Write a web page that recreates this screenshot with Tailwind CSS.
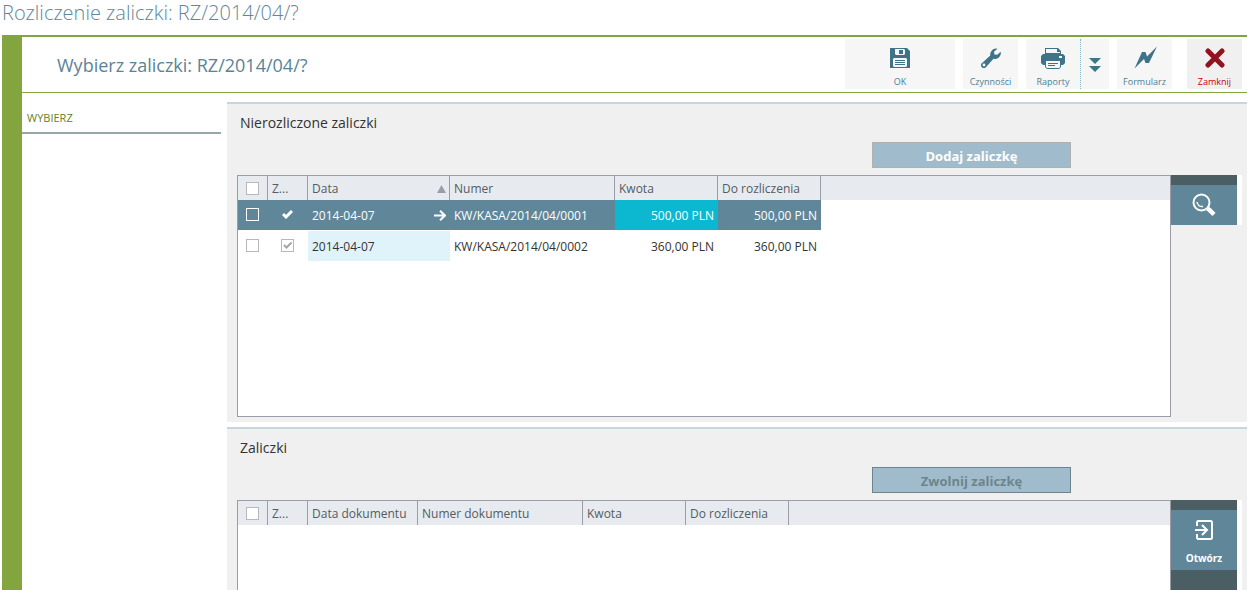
<!DOCTYPE html>
<html lang="pl">
<head>
<meta charset="utf-8">
<meta name="viewport" content="width=device-width, initial-scale=1">
<title>Rozliczenie zaliczki</title>
<script src="https://cdn.jsdelivr.net/npm/@tailwindcss/browser@4"></script>
</head>
<body class="flex h-screen flex-col overflow-hidden bg-white pr-0.5 pl-0.5 font-['Open_Sans','Noto_Sans',sans-serif] text-xs text-[#333]">
<h1 class="h-[35px] shrink-0 pt-px text-xl leading-6 font-light text-[#5f8799]">Rozliczenie zaliczki: RZ/2014/04/?</h1>

<div class="flex min-h-0 flex-1 border-t-2 border-[#82a53d]">
  <div class="w-5 shrink-0 bg-[#82a53d]"></div>
  <div class="flex min-w-0 flex-1 flex-col">

    <header class="flex h-14 shrink-0 items-start border-b border-[#82a53d] pt-0.5 pr-[5px] pl-[35px] text-[#5f8799]">
      <h2 class="flex-1 pt-3 text-lg leading-7 text-[#5a8496]">Wybierz zaliczki: RZ/2014/04/?</h2>
      <nav class="flex gap-2 text-[9px] leading-3 text-[#4f7f94]">
        <button type="button" class="flex h-[50px] w-[110px] flex-col items-center gap-2 bg-[#f6f6f6] pt-[9px]">
          <svg class="size-5 shrink-0" viewBox="0 0 20 20" fill="none"><path fill="#3f7488" fill-rule="evenodd" d="M0 0H17L20 3V20H0ZM5 1V6L6 7H14L15 6V2L14 1ZM3 11V18L4 19H16L17 18V11L16 10H4Z"/><path fill="#3f7488" d="M9 2h4v4H9z"/><path stroke="#3f7488" d="M5 12.500h10M5 14.500h10M5 16.500h10"/></svg>
          OK
        </button>
        <button type="button" class="flex h-[50px] w-[55px] flex-col items-center gap-2 bg-[#f6f6f6] pt-[9px]">
          <svg class="size-5 shrink-0" viewBox="0 0 20 20"><path fill="#3f7488" fill-rule="evenodd" d="M16.500.7A6 6 0 0 0 9.300 7.600L.8 15.200A2.900 2.900 0 0 0 4.900 19.300L12.500 10.800A6 6 0 0 0 19.700 3.700L16.200 6.800L13.400 6.400L13 3.800ZM3 15.600a1.400 1.400 0 1 1 0 2.800a1.400 1.400 0 0 1 0-2.800Z"/></svg>
          Czynności
        </button>
        <div class="flex">
          <button type="button" class="flex h-[50px] w-[55px] flex-col items-center gap-2 border-r border-dotted border-[#8bb0c0] bg-[#f6f6f6] pt-[9px]">
            <svg class="h-[21px] w-6 shrink-0 -mb-px" viewBox="0 0 24 21"><path fill="#3f7488" fill-rule="evenodd" d="M4 6V0H17L20 3V6H22L24 8V15L22 17H20V19L18 21H6L4 19V17H2L0 15V8L2 6ZM5 1V5H19V4H16V1ZM18 8V10H21V8ZM5 13V19L6 20H18L19 19V13Z"/><path fill="#3f7488" d="M7 15h10v1H7zM7 17h7v1H7z"/></svg>
            Raporty
          </button>
          <button type="button" aria-label="Więcej raportów" class="flex h-[50px] w-7 items-center justify-center bg-[#f6f6f6] pt-px">
            <svg class="h-[14px] w-3" viewBox="0 0 12 14"><path fill="#3f7488" d="M0 0H12L6 6ZM0 8H12L6 14Z"/></svg>
          </button>
        </div>
        <button type="button" class="flex h-[50px] w-[55px] flex-col items-center gap-2 bg-[#f6f6f6] pt-[9px]">
          <svg class="h-5 w-6 shrink-0 overflow-visible" viewBox="0 0 24 20"><path fill="#3f7488" d="M1.500 20.500L9 4H12.500L14 8.500L24-1.500L16 15H12.500L11 11Z"/></svg>
          Formularz
        </button>
        <button type="button" class="ml-[7px] flex h-[50px] w-[55px] flex-col items-center gap-2 bg-[#f0f0f0] pt-[9px] text-[#c8000d]">
          <svg class="size-5 shrink-0" viewBox="0 0 20 20" fill="none"><path stroke="#94121f" stroke-width="5" stroke-linecap="round" d="M3 3L17 17M17 3L3 17"/></svg>
          Zamknij
        </button>
      </nav>
    </header>

    <div class="flex min-h-0 flex-1 gap-[6px]">
      <aside class="w-[199px] shrink-0">
        <a href="#" class="block h-[41px] border-b-2 border-[#96a6ab] pt-[17px] pl-[5px] text-[11px] leading-4 text-[#6b7f1e]">WYBIERZ</a>
      </aside>

      <main class="flex min-w-0 flex-1 flex-col gap-[5px] pt-[9px]">
        <section class="shrink-0 border-t-2 border-[#c5d6dd] bg-[#f0f0f0] pr-[5px] pb-[5px] pl-[10px]">
          <h3 class="h-[38px] pt-[7px] pl-[3px] text-sm leading-6">Nierozliczone zaliczki</h3>
          <div class="mr-[171px] flex h-[33px] items-start justify-end">
            <button type="button" class="h-[26px] w-[199px] border border-[#b0b0b0] bg-[#a0bccc] pt-px text-[13px] leading-5 font-bold text-white">Dodaj zaliczkę</button>
          </div>
          <div class="flex items-start">
            <div class="h-[242px] min-w-0 flex-1 border border-[#9c9ca8] bg-white">
              <table class="w-full table-fixed border-collapse">
                <colgroup><col class="w-[30px]"><col class="w-10"><col class="w-[142px]"><col class="w-[165px]"><col class="w-[103px]"><col class="w-[103px]"><col></colgroup>
                <thead class="bg-[#e7ebf0] text-left text-[#535c62]">
                  <tr class="h-6">
                    <th class="p-0 pr-0.5 font-normal shadow-[inset_-1px_0_#9c9ca8]"><input type="checkbox" aria-label="Zaznacz wszystkie" class="mx-auto block size-[13px] appearance-none border border-[#b8b8b8] bg-white"></th>
                    <th class="p-0 pt-0.5 pl-1 font-normal shadow-[inset_-1px_0_#9c9ca8]">Z...</th>
                    <th class="p-0 pt-0.5 pl-1 font-normal shadow-[inset_-1px_0_#9c9ca8]"><span class="flex items-center justify-between pr-1">Data <svg class="h-2 w-[9px]" viewBox="0 0 9 8"><path fill="#9c9ca8" d="M4.500 0L9 8H0Z"/></svg></span></th>
                    <th class="p-0 pt-0.5 pl-1 font-normal shadow-[inset_-1px_0_#9c9ca8]">Numer</th>
                    <th class="p-0 pt-0.5 pl-1 font-normal shadow-[inset_-1px_0_#9c9ca8]">Kwota</th>
                    <th class="p-0 pt-0.5 pl-1 font-normal shadow-[inset_-1px_0_#9c9ca8]">Do rozliczenia</th>
                    <td class="p-0"></td>
                  </tr>
                </thead>
                <tbody>
                  <tr class="h-[30px] text-white">
                    <td class="bg-[#5f8799] p-0 pr-0.5"><input type="checkbox" aria-label="Zaznacz KW/KASA/2014/04/0001" class="mx-auto block size-[13px] appearance-none border border-white"></td>
                    <td class="bg-[#5f8799] p-0 pr-0.5"><svg role="img" aria-label="Tak" class="mx-auto block h-[9px] w-[11px]" viewBox="0 0 11 9" fill="none"><path stroke="#fff" stroke-width="3" d="M1 4L4 7L10 1"/></svg></td>
                    <td class="bg-[#5f8799] p-0 pt-0.5 pl-1"><span class="flex items-center justify-between pr-1">2014-04-07 <svg class="h-[11px] w-3" viewBox="0 0 12 11" fill="none"><path stroke="#fff" stroke-width="2" d="M0 5.500H11M6 .7L11 5.500L6 10.300"/></svg></span></td>
                    <td class="bg-[#5f8799] p-0 pt-0.5 pl-1">KW/KASA/2014/04/0001</td>
                    <td class="bg-[#0cb8cf] p-0 pt-0.5 pr-1 text-right">500,00 PLN</td>
                    <td class="bg-[#5f8799] p-0 pt-0.5 pr-1 text-right">500,00 PLN</td>
                    <td class="p-0"></td>
                  </tr>
                  <tr class="h-[31px] border-t border-white">
                    <td class="p-0 pr-0.5"><input type="checkbox" aria-label="Zaznacz KW/KASA/2014/04/0002" class="mx-auto block size-[13px] appearance-none border border-[#b8b8b8] bg-white"></td>
                    <td class="p-0 pr-0.5"><label class="mx-auto grid size-[13px] place-items-center"><input type="checkbox" checked aria-label="Zatwierdzona" class="col-start-1 row-start-1 block size-[13px] appearance-none border border-[#b8b8b8] bg-white"><svg class="pointer-events-none col-start-1 row-start-1 h-[7px] w-[9px]" viewBox="0 0 9 7" fill="none"><path stroke="#a6a6a6" stroke-width="2" d="M1 3L3.500 5.500L8.500.5"/></svg></label></td>
                    <td class="bg-[#e0f3fb] p-0 pt-0.5 pl-1">2014-04-07</td>
                    <td class="p-0 pt-0.5 pl-1">KW/KASA/2014/04/0002</td>
                    <td class="p-0 pt-0.5 pr-1 text-right">360,00 PLN</td>
                    <td class="p-0 pt-0.5 pr-1 text-right">360,00 PLN</td>
                    <td class="p-0"></td>
                  </tr>
                </tbody>
              </table>
            </div>
            <div class="w-[71px] shrink-0 bg-white pr-[5px]">
              <button type="button" aria-label="Szukaj" class="flex h-[50px] w-full items-center justify-center border-t-10 border-[#4a5e64] bg-[#5f8799]">
                <svg class="size-6" viewBox="0 0 24 24" fill="none" stroke="#fff"><circle cx="9.500" cy="9.500" r="8" stroke-width="2"/><path stroke-width="1.500" d="M5 9C5.500 12.500 8 14 11 13.500"/><path stroke-width="4.500" d="M15.500 15.500L17.500 17L22 21.500"/></svg>
              </button>
            </div>
          </div>
        </section>

        <section class="flex min-h-0 flex-1 flex-col border-t-2 border-[#c5d6dd] bg-[#f0f0f0] pr-[5px] pl-[10px]">
          <h3 class="h-[38px] shrink-0 pt-[7px] pl-[3px] text-sm leading-6">Zaliczki</h3>
          <div class="mr-[171px] flex h-[33px] shrink-0 items-start justify-end">
            <button type="button" class="h-[26px] w-[199px] border border-[#6c858c] bg-[#a0bccc] pt-px text-[13px] leading-5 font-bold text-[#6c858c]">Zwolnij zaliczkę</button>
          </div>
          <div class="flex min-h-0 flex-1">
            <div class="min-w-0 flex-1 border border-b-0 border-[#9c9ca8] bg-white">
              <table class="w-full table-fixed border-collapse">
                <colgroup><col class="w-[30px]"><col class="w-10"><col class="w-[110px]"><col class="w-[165px]"><col class="w-[103px]"><col class="w-[103px]"><col></colgroup>
                <thead class="bg-[#e7ebf0] text-left text-[#535c62]">
                  <tr class="h-6">
                    <th class="p-0 pr-0.5 font-normal shadow-[inset_-1px_0_#9c9ca8]"><input type="checkbox" aria-label="Zaznacz wszystkie" class="mx-auto block size-[13px] appearance-none border border-[#b8b8b8] bg-white"></th>
                    <th class="p-0 pt-0.5 pl-1 font-normal shadow-[inset_-1px_0_#9c9ca8]">Z...</th>
                    <th class="p-0 pt-0.5 pl-1 font-normal shadow-[inset_-1px_0_#9c9ca8]">Data dokumentu</th>
                    <th class="p-0 pt-0.5 pl-1 font-normal shadow-[inset_-1px_0_#9c9ca8]">Numer dokumentu</th>
                    <th class="p-0 pt-0.5 pl-1 font-normal shadow-[inset_-1px_0_#9c9ca8]">Kwota</th>
                    <th class="p-0 pt-0.5 pl-1 font-normal shadow-[inset_-1px_0_#9c9ca8]">Do rozliczenia</th>
                    <td class="p-0"></td>
                  </tr>
                </thead>
              </table>
            </div>
            <div class="w-[71px] shrink-0 bg-white pr-[5px]">
              <div class="h-full bg-[#4a5e64] pt-[10px]">
                <button type="button" class="flex h-[60px] w-full flex-col items-center gap-3 bg-[#5f8799] pt-[10px] text-[10px] leading-3 font-bold text-white">
                  <svg class="h-5 w-[18px] shrink-0" viewBox="0 0 18 20" fill="none" stroke="#fff" stroke-width="2"><path d="M2 6V2L3 1H16L17 2V18L16 19H3L2 18V14M0 10H11M7 5L12 10L7 15"/></svg>
                  Otwórz
                </button>
              </div>
            </div>
          </div>
        </section>
      </main>
    </div>
  </div>
</div>
</body>
</html>
